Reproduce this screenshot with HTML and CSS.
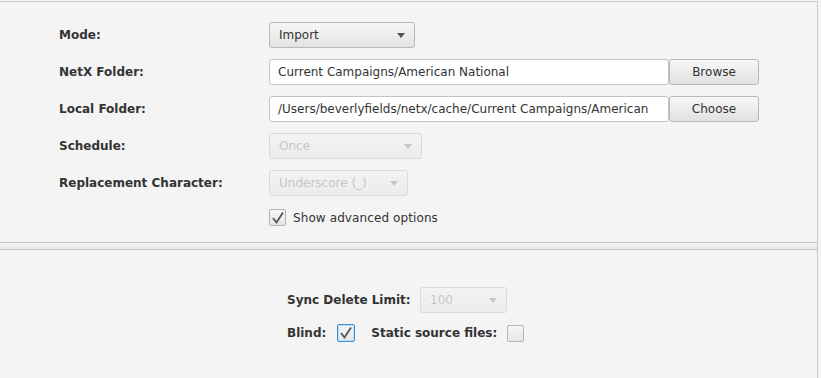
FILE: index.html
```html
<!DOCTYPE html>
<html lang="en">
<head>
    <meta charset="UTF-8">
    <title>Sync Settings</title>
    <link rel="stylesheet" href="styles.css">
</head>
<body>

<div class="panel">
    <div class="main-form">
        <label class="field-label">Mode:</label>
        <div class="combo combo-mode">
            <span class="combo-text">Import</span>
            <span class="combo-arrow"></span>
        </div>

        <label class="field-label">NetX Folder:</label>
        <div class="path-row">
            <div class="text-field">Current Campaigns/American National</div>
            <button class="btn">Browse</button>
        </div>

        <label class="field-label">Local Folder:</label>
        <div class="path-row">
            <div class="text-field">/Users/beverlyfields/netx/cache/Current Campaigns/American</div>
            <button class="btn">Choose</button>
        </div>

        <label class="field-label">Schedule:</label>
        <div class="combo combo-schedule disabled">
            <span class="combo-text">Once</span>
            <span class="combo-arrow"></span>
        </div>

        <label class="field-label">Replacement Character:</label>
        <div class="combo combo-replace disabled">
            <span class="combo-text">Underscore (_)</span>
            <span class="combo-arrow"></span>
        </div>

        <span></span>
        <div class="check-row">
            <span class="checkbox">
                <svg width="14" height="14" viewBox="0 0 14 14"><path d="M2 7 L5.5 11.5 L12 1.5" fill="none" stroke="#555" stroke-width="1.8"/></svg>
            </span>
            <span class="check-text">Show advanced options</span>
        </div>
    </div>

    <div class="separator"></div>

    <div class="advanced-form">
        <label class="field-label">Sync Delete Limit:</label>
        <div class="combo combo-limit disabled">
            <span class="combo-text">100</span>
            <span class="combo-arrow"></span>
        </div>
    </div>
    <div class="flag-row">
        <label class="field-label">Blind:</label>
        <span class="checkbox focused">
            <svg width="14" height="14" viewBox="0 0 14 14"><path d="M2 7 L5.5 11.5 L12 1.5" fill="none" stroke="#555" stroke-width="1.8"/></svg>
        </span>
        <label class="field-label static-label">Static source files:</label>
        <span class="checkbox"></span>
    </div>
</div>

</body>
</html>
```

FILE: styles.css
```css
body {
    margin: 0;
    background: #f4f4f4;
    font-family: 'DejaVu Sans', sans-serif;
    font-size: 12px;
    color: #333;
}
.panel {
    width: 817px;
    height: 377px;
    margin-top: 1px;
    border-top: 1px solid #c8c8c8;
    border-right: 1px solid #c8c8c8;
    background: #f4f4f4;
}
/* top form */
.main-form {
    display: grid;
    grid-template-columns: 210px auto;
    row-gap: 11px;
    align-items: center;
    padding: 20px 0 0 59px;
}
.field-label {
    font-weight: bold;
    color: #333;
}
.combo {
    display: flex;
    align-items: center;
    justify-content: space-between;
    box-sizing: border-box;
    height: 26px;
    padding: 0 9px 0 9px;
    border: 1px solid #b8b8b8;
    border-radius: 3px;
    background: linear-gradient(#f7f7f7, #e3e3e3);
    color: #333;
}
.combo-arrow {
    width: 0;
    height: 0;
    border-left: 4px solid transparent;
    border-right: 4px solid transparent;
    border-top: 5px solid #555;
}
.combo-mode { width: 146px; }
.combo-schedule { width: 153px; }
.combo-replace { width: 139px; }
.combo-limit { width: 87px; }
.combo.disabled {
    border-color: #dadada;
    background: linear-gradient(#f3f3f3, #ececec);
    color: #c6c6c6;
}
.combo.disabled .combo-arrow {
    border-top-color: #c6c6c6;
}
.path-row {
    display: flex;
}
.text-field {
    box-sizing: border-box;
    width: 400px;
    height: 26px;
    line-height: 24px;
    padding-left: 8px;
    border: 1px solid #c4c4c4;
    border-radius: 3px;
    background: #fff;
    white-space: nowrap;
    overflow: hidden;
}
.btn {
    box-sizing: border-box;
    width: 90px;
    height: 26px;
    border: 1px solid #b8b8b8;
    border-radius: 3px;
    background: linear-gradient(#f7f7f7, #e1e1e1);
    font-family: inherit;
    font-size: 12px;
    color: #333;
    padding: 0;
}
.check-row {
    display: flex;
    align-items: center;
    gap: 7px;
    margin-top: 2px;
}
.check-text {
    letter-spacing: 0.1px;
}
.checkbox {
    display: flex;
    align-items: center;
    justify-content: center;
    box-sizing: border-box;
    width: 17px;
    height: 17px;
    border: 1px solid #b4b4b4;
    border-radius: 2px;
    background: linear-gradient(#f6f6f6, #e6e6e6);
}
.checkbox.focused {
    width: 18px;
    height: 18px;
    border: 1px solid #3b8fd0;
    box-shadow: inset 0 0 0 1px #bfe1f6;
}
/* separator bar */
.separator {
    height: 6px;
    margin-top: 16px;
    border-top: 1px solid #c8c8c8;
    border-bottom: 1px solid #c8c8c8;
    background: linear-gradient(#f6f6f6, #e6e6e6);
}
/* advanced form */
.advanced-form {
    display: grid;
    grid-template-columns: 133px auto;
    align-items: center;
    padding: 37px 0 0 287px;
}
.flag-row {
    display: flex;
    align-items: center;
    padding: 11px 0 0 287px;
}
.flag-row .checkbox.focused {
    margin-left: 11px;
}
.static-label {
    margin-left: 16px;
    margin-right: 10px;
}
```
